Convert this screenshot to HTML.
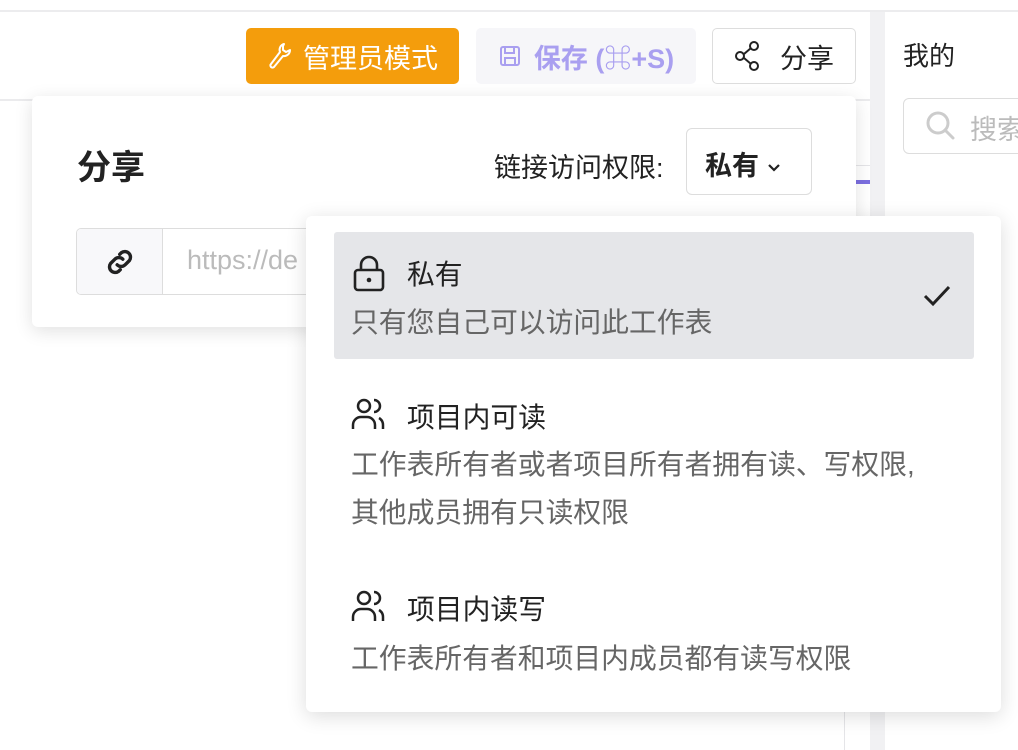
<!DOCTYPE html>
<html><head><meta charset="utf-8"><style>
*{box-sizing:border-box;margin:0;padding:0}
body{width:1018px;height:750px;overflow:hidden;background:#fff;position:relative;font-family:"Liberation Sans","Noto Sans CJK SC",sans-serif;color:#222}
.abs{position:absolute;white-space:nowrap}
.btn{position:absolute;top:28px;height:56px;border-radius:5px;display:flex;align-items:center;justify-content:center;font-size:27px}
.desc{color:#666;font-size:27.8px}
.ttl{font-size:27.8px;color:#222}
</style></head><body>
<div class="abs" style="left:0;top:10px;width:1018px;height:2px;background:#ececee"></div>
<div class="abs" style="left:0;top:99px;width:870px;height:2px;background:#ebebed"></div>
<div class="abs" style="left:870px;top:12px;width:15px;height:738px;background:#f1f1f3"></div>
<div class="abs" style="left:844px;top:100px;width:1px;height:650px;background:#e5e5e8"></div>
<div class="abs" style="left:845px;top:165px;width:25px;height:1px;background:#e5e5e8"></div>
<div class="abs" style="left:856px;top:180px;width:14px;height:4px;background:#7c6fe0"></div>
<div class="abs" style="left:903px;top:36px;font-size:26px">我的</div>
<div class="abs" style="left:903px;top:98px;width:140px;height:56px;border:1px solid #ddd;border-radius:6px"></div>
<svg class="abs" style="left:923px;top:108px" width="36" height="36" viewBox="0 0 36 36"><circle cx="15" cy="15" r="10" fill="none" stroke="#ccc" stroke-width="3"/><path d="M22 22l8 8" stroke="#ccc" stroke-width="3" stroke-linecap="round"/></svg>
<div class="abs" style="left:970px;top:108px;font-size:27px;color:#bbb">搜索</div>

<div class="btn" style="left:246px;width:213px;background:#f49d0c;color:#fff">
<svg width="26" height="30" viewBox="0 0 26 30" style="margin-right:10px"><path d="M17 3a6 6 0 0 0-4 8L4 23a2 2 0 0 0 3 3l9-11a6 6 0 0 0 7-6l-4 2-3-2 0-4z" fill="none" stroke="#fff" stroke-width="2" stroke-linejoin="round"/></svg>管理员模式</div>
<div class="btn" style="left:476px;width:220px;background:#f6f6f9;color:#a99ff0;font-weight:bold">
<svg width="24" height="26" viewBox="0 0 24 24" style="margin-right:12px"><rect x="3" y="3" width="18" height="18" rx="2" fill="none" stroke="#a99ff0" stroke-width="2"/><path d="M7 3v6h9V3M7 21v-7h10v7" fill="none" stroke="#a99ff0" stroke-width="2"/></svg>保存 (⌘+S)</div>
<div class="btn" style="left:712px;width:144px;border:1px solid #ddd;background:#fff">
<svg width="28" height="30" viewBox="0 0 28 30" style="margin-right:18px"><circle cx="20" cy="5" r="4" fill="none" stroke="#222" stroke-width="2"/><circle cx="6" cy="15" r="4" fill="none" stroke="#222" stroke-width="2"/><circle cx="20" cy="25" r="4" fill="none" stroke="#222" stroke-width="2"/><path d="M10 13l7-6M10 17l7 6" stroke="#222" stroke-width="2"/></svg>分享</div>

<div class="abs" style="left:32px;top:96px;width:824px;height:231px;background:#fff;border-radius:6px;box-shadow:0 4px 18px rgba(0,0,0,.12)">
<div class="abs" style="left:45px;top:44px;font-size:34px;font-weight:bold">分享</div>
<div class="abs" style="left:462px;top:50px;font-size:27px">链接访问权限:</div>
<div class="abs" style="left:654px;top:32px;width:126px;height:67px;border:1px solid #ddd;border-radius:6px;font-size:27px;font-weight:bold;padding:15px 0 0 18px">私有 <svg width="14" height="10" viewBox="0 0 14 10" style="vertical-align:middle"><path d="M2 2l5 5 5-5" fill="none" stroke="#222" stroke-width="2.2"/></svg></div>
<div class="abs" style="left:44px;top:132px;width:300px;height:67px;border:1px solid #ddd;border-radius:5px;overflow:hidden">
<div class="abs" style="left:0;top:0;width:86px;height:67px;background:#f8f8fa;border-right:1px solid #ddd"></div>
<svg class="abs" style="left:26px;top:16px" width="34" height="34" viewBox="0 0 24 24"><path d="M10 14a4 4 0 0 0 5.6 0l3-3a4 4 0 0 0-5.6-5.6l-1.2 1.2M14 10a4 4 0 0 0-5.6 0l-3 3a4 4 0 0 0 5.6 5.6l1.2-1.2" fill="none" stroke="#222" stroke-width="2.4" stroke-linecap="round"/></svg>
<div class="abs" style="left:110px;top:16px;font-size:27px;color:#bbb">https://de</div>
</div></div>

<div class="abs" style="left:648px;top:204px;width:14px;height:14px;background:#fff;transform:rotate(45deg)"></div>
<div class="abs" style="left:306px;top:216px;width:695px;height:496px;background:#fff;border-radius:6px;box-shadow:0 4px 20px rgba(0,0,0,.14)">
<div class="abs" style="left:28px;top:16px;width:640px;height:127px;background:#e5e6e9;border-radius:3px"></div>
<svg class="abs" style="left:46px;top:38px" width="34" height="38" viewBox="0 0 34 38"><rect x="3" y="16" width="28" height="20" rx="3" fill="none" stroke="#222" stroke-width="2.6"/><path d="M9 16v-5a8 8 0 0 1 16 0v5" fill="none" stroke="#222" stroke-width="2.6"/><circle cx="17" cy="26" r="2.3" fill="#222"/></svg>
<div class="abs ttl" style="left:101px;top:37px">私有</div>
<div class="abs desc" style="left:45px;top:85px">只有您自己可以访问此工作表</div>
<svg class="abs" style="left:616px;top:68px" width="30" height="24" viewBox="0 0 30 24"><path d="M3 12l8 8L27 3" fill="none" stroke="#222" stroke-width="3"/></svg>
<svg class="abs" style="left:45px;top:180px" width="36" height="36" viewBox="0 0 36 36"><circle cx="13" cy="10" r="6" fill="none" stroke="#222" stroke-width="2.5"/><path d="M2 33v-4a8 8 0 0 1 8-8h6a8 8 0 0 1 8 8v4" fill="none" stroke="#222" stroke-width="2.5"/><path d="M23 4a6 6 0 0 1 0 12M28 22a8 8 0 0 1 4 7v4" fill="none" stroke="#222" stroke-width="2.5"/></svg>
<div class="abs ttl" style="left:101px;top:180px">项目内可读</div>
<div class="abs desc" style="left:45px;top:225px;line-height:48px">工作表所有者或者项目所有者拥有读、写权限,<br>其他成员拥有只读权限</div>
<svg class="abs" style="left:45px;top:372px" width="36" height="36" viewBox="0 0 36 36"><circle cx="13" cy="10" r="6" fill="none" stroke="#222" stroke-width="2.5"/><path d="M2 33v-4a8 8 0 0 1 8-8h6a8 8 0 0 1 8 8v4" fill="none" stroke="#222" stroke-width="2.5"/><path d="M23 4a6 6 0 0 1 0 12M28 22a8 8 0 0 1 4 7v4" fill="none" stroke="#222" stroke-width="2.5"/></svg>
<div class="abs ttl" style="left:101px;top:372px">项目内读写</div>
<div class="abs desc" style="left:45px;top:421px">工作表所有者和项目内成员都有读写权限</div>
</div>
</body></html>
